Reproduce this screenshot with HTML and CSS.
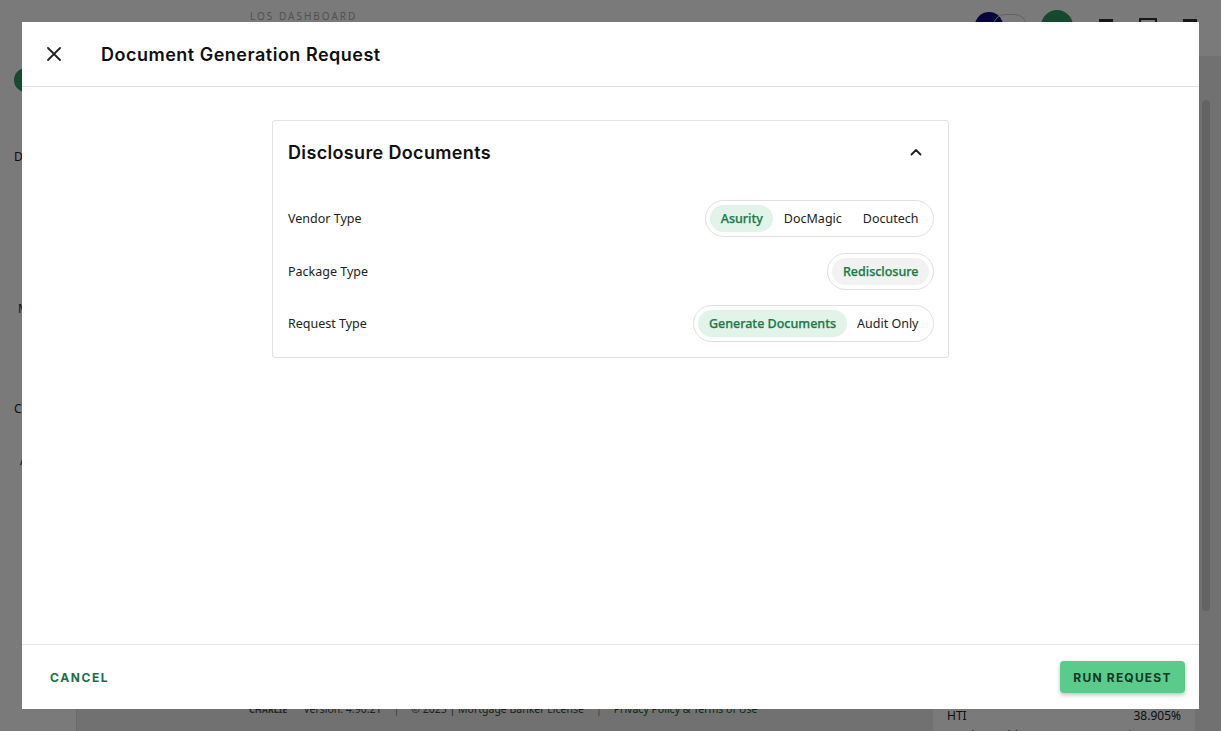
FILE: index.html
```html
<!DOCTYPE html>
<html lang="en">
<head>
<meta charset="utf-8">
<title>Document Generation Request</title>
<link rel="stylesheet" href="styles.css">
</head>
<body>
<div class="page">
  <header class="topbar">
    <div class="brand-text">LOS DASHBOARD</div>
    <div class="top-tools">
      <span class="avatar navy"></span>
      <span class="toggle"></span>
      <span class="avatar green"></span>
      <span class="tool-icon"></span>
      <span class="tool-icon box"></span>
      <span class="tool-icon"></span>
    </div>
  </header>
  <div class="body-row">
    <aside class="sidebar">
      <span class="side-dot"></span>
      <span class="side-letter l1">D</span>
      <span class="side-letter l2">M</span>
      <span class="side-letter l3">C</span>
      <span class="side-letter l4">A</span>
    </aside>
    <main class="main">
      <div class="content-col">
        <div class="content-card"></div>
        <div class="footer-line">
          <span class="logo-small">CHARLIE</span>
          <span>Version: 4.90.21</span><span class="sep">|</span>
          <span>© 2025 | Mortgage Banker License</span><span class="sep">|</span>
          <span class="footer-link">Privacy Policy &amp; Terms of Use</span>
        </div>
      </div>
      <div class="side-panel">
        <div class="panel-row"><span>HTI</span><span>38.905%</span></div>
        <div class="panel-row"><span>Total Monthly Payment</span><span>$3,900.40</span></div>
      </div>
      <div class="scroll-track"><div class="scroll-thumb"></div></div>
    </main>
  </div>
</div>

<div class="overlay">
  <div class="modal">
    <div class="modal-header">
      <button class="close-btn" aria-label="Close">
        <svg width="14" height="14" viewBox="0 0 14 14"><path d="M1 1L13 13M13 1L1 13" stroke="#222" stroke-width="1.8" stroke-linecap="round"/></svg>
      </button>
      <h1 class="modal-title">Document Generation Request</h1>
    </div>
    <div class="modal-body">
      <section class="card">
        <div class="card-head">
          <h2 class="card-title">Disclosure Documents</h2>
          <svg class="chev" width="12" height="8" viewBox="0 0 12 8"><path d="M1.5 6.5L6 2L10.5 6.5" fill="none" stroke="#222" stroke-width="1.8" stroke-linecap="round" stroke-linejoin="round"/></svg>
        </div>
        <div class="rows">
          <div class="row">
            <span class="label">Vendor Type</span>
            <div class="seg">
              <span class="opt on">Asurity</span>
              <span class="opt">DocMagic</span>
              <span class="opt">Docutech</span>
            </div>
          </div>
          <div class="row">
            <span class="label">Package Type</span>
            <div class="seg">
              <span class="opt on gray">Redisclosure</span>
            </div>
          </div>
          <div class="row">
            <span class="label">Request Type</span>
            <div class="seg">
              <span class="opt on">Generate Documents</span>
              <span class="opt">Audit Only</span>
            </div>
          </div>
        </div>
      </section>
    </div>
    <div class="modal-footer">
      <button class="btn-cancel">CANCEL</button>
      <button class="btn-run">RUN REQUEST</button>
    </div>
  </div>
</div>
</body>
</html>
```

FILE: styles.css
```css
* { box-sizing: border-box; }
html, body { margin: 0; padding: 0; }
body {
  width: 1221px;
  height: 731px;
  overflow: hidden;
  font-family: "Noto Sans", "Open Sans", sans-serif;
  background: #fff;
}

/* ---------- background page ---------- */
.page { width: 1221px; height: 731px; display: flex; flex-direction: column; }
.topbar {
  height: 56px;
  display: flex;
  align-items: flex-end;
  justify-content: space-between;
  padding: 0 24px 14px 250px;
  background: #fff;
}
.brand-text { font-size: 10px; color: #aaa; letter-spacing: 2px; line-height: 1; align-self: flex-start; margin-top: 11px; }
.top-tools { display: flex; align-items: center; gap: 14px; }
.avatar { width: 28px; height: 28px; border-radius: 50%; display: inline-block; }
.avatar.navy { background: #0b0a7e; }
.avatar.green { background: #2f9a5e; width: 32px; height: 32px; }
.toggle { width: 34px; height: 24px; border: 1px solid #ccc; border-radius: 12px; margin-left: -24px; }
.tool-icon { width: 14px; height: 14px; border-top: 3px solid #333; display: inline-block; margin-left: 12px; }
.tool-icon.box { border: 2px solid #333; width: 18px; height: 16px; }

.body-row { flex: 1; display: flex; }
.sidebar { width: 79px; background: #fff; position: relative; border-right: 1px solid #ddd; }
.side-dot { position: absolute; left: 14px; top: 12px; width: 24px; height: 24px; border-radius: 50%; background: #2f9a5e; }
.side-letter { position: absolute; left: 14px; font-size: 12px; color: #222; }
.side-letter.l1 { top: 92px; }
.side-letter.l2 { top: 244px; left: 18px; }
.side-letter.l3 { top: 344px; }
.side-letter.l4 { top: 396px; left: 20px; }

.main { flex: 1; display: flex; background: #ececec; padding: 0 8px 0 22px; gap: 4px; }
.content-col { width: 830px; display: flex; flex-direction: column; justify-content: flex-end; }
.content-card { flex: 1; background: #ececec; }
.footer-line {
  height: 29px;
  display: flex;
  align-items: flex-start;
  gap: 12px;
  padding-left: 150px;
  font-size: 10.5px;
  line-height: 15px;
  color: #444;
}
.logo-small { font-size: 9px; font-weight: 700; color: #555; margin-right: 4px; }
.sep { color: #888; }
.footer-link { color: #0c5a2f; font-size: 10.5px; }
.side-panel {
  width: 262px;
  background: #fff;
  display: flex;
  flex-direction: column;
  justify-content: flex-end;
  padding: 0 14px;
  margin-bottom: -16px;
}
.panel-row { display: flex; justify-content: space-between; font-size: 12px; color: #222; height: 20px; }
.scroll-track { width: 14px; padding: 44px 3px 120px; }
.scroll-thumb { height: 100%; background: #cfcfcf; border-radius: 4px; }

/* ---------- overlay + modal ---------- */
.overlay {
  position: fixed;
  inset: 0;
  background: rgba(0, 0, 0, 0.52);
  padding: 22px;
}
.modal {
  width: 1177px;
  height: 687px;
  background: #fff;
  display: flex;
  flex-direction: column;
}
.modal-header {
  height: 65px;
  flex: none;
  display: flex;
  align-items: center;
  border-bottom: 1px solid #e2e2e2;
  padding-left: 24px;
}
.close-btn {
  width: 16px; height: 16px; padding: 0; border: 0; background: none;
  display: flex; align-items: center; justify-content: center;
  margin-right: 39px;
}
.modal-title {
  margin: 0;
  font-family: Inter, "Open Sans", sans-serif;
  font-size: 18px;
  font-weight: 600;
  color: #111;
  letter-spacing: 0.5px;
}
.modal-body {
  flex: 1;
  display: flex;
  justify-content: center;
  padding-top: 33px;
}
.card {
  width: 677px;
  height: 238px;
  border: 1px solid #e2e2e2;
  border-radius: 3px;
  padding: 0 14px 0 15px;
}
.card-head {
  height: 62px;
  display: flex;
  align-items: center;
  justify-content: space-between;
  padding-right: 12px;
}
.card-title {
  margin: 0;
  font-family: Inter, "Open Sans", sans-serif;
  font-size: 18px;
  font-weight: 600;
  color: #111;
  letter-spacing: 0.35px;
}
.rows { display: flex; flex-direction: column; gap: 15.5px; padding-top: 17px; }
.row { display: flex; justify-content: space-between; align-items: center; height: 37px; }
.label { font-size: 12.5px; color: #222; }
.seg {
  display: flex;
  align-items: center;
  height: 37px;
  padding: 0 4px;
  border: 1px solid #e0e0e0;
  border-radius: 19px;
}
.opt {
  height: 27px;
  display: flex;
  align-items: center;
  padding: 0 10.5px;
  border-radius: 14px;
  font-size: 12.5px;
  color: #222;
}
.opt.on { background: #e2f3e9; color: #1c7a48; font-weight: 500; -webkit-text-stroke: 0.25px #1c7a48; }
.opt.on.gray { background: #f2f2f2; }

.modal-footer {
  height: 65px;
  flex: none;
  border-top: 1px solid #e2e2e2;
  display: flex;
  align-items: center;
  justify-content: space-between;
  padding: 0 14px 0 28px;
}
.btn-cancel {
  border: 0; background: none; padding: 0;
  font-family: Inter, "Open Sans", sans-serif;
  font-size: 12px; font-weight: 700; letter-spacing: 1.6px;
  color: #1c6e48;
}
.btn-run {
  width: 125px; height: 32px;
  border: 0; border-radius: 4px;
  background: #5bcb8c;
  box-shadow: 0 2px 4px rgba(0,0,0,0.25);
  font-family: Inter, "Open Sans", sans-serif;
  font-size: 12px; font-weight: 700; letter-spacing: 1.2px;
  color: #0e3a22;
}
```
